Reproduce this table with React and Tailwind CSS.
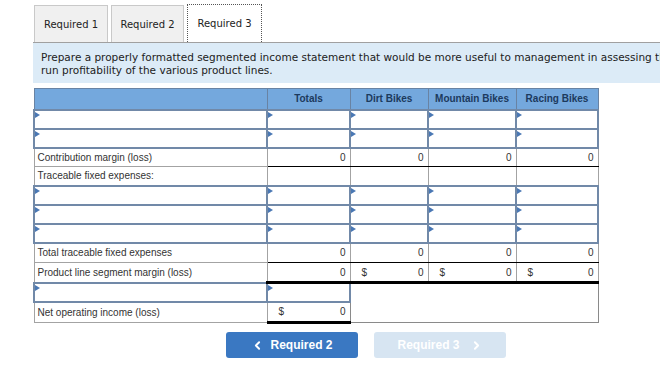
import { ChevronLeft, ChevronRight } from "lucide-react";

const tabs = [
  { label: "Required 1", w: "w-[74px]" },
  { label: "Required 2", w: "w-[73px]" },
  { label: "Required 3", w: "w-[75px]", active: true },
];

// small blue marker in the corner of every editable cell
const InputCell = () => (
  <td className="relative p-0 border-2 border-[#7189a8] bg-white">
    <span className="absolute left-0 top-[1px] h-0 w-0 border-y-[3px] border-y-transparent border-l-[5px] border-l-[#4a78b4]" />
  </td>
);

const InputRow = ({ dataCols = 4 }) => (
  <tr className="h-[19px]">
    <InputCell />
    {Array.from({ length: dataCols }).map((_, i) => (
      <InputCell key={i} />
    ))}
  </tr>
);

const Label = ({ children }) => (
  <td className="border border-[#a3a3a3] px-[3px] text-left text-[10px] text-[#333]">
    {children}
  </td>
);

const Num = ({ dollar, cls = "" }) => (
  <td className={"border-x border-[#a3a3a3] px-[4px] text-[10px] text-[#333] " + cls}>
    <div className="flex items-center justify-between">
      <span className="pl-[7px]">{dollar ? "$" : ""}</span>
      <span>0</span>
    </div>
  </td>
);

const App = () => {
  return (
    <div className="w-[660px] h-[374px] overflow-hidden bg-white">
      <div className="flex items-end gap-[3px] pl-[34px] pt-[4px] font-['DejaVu_Sans',Verdana,sans-serif] text-[10px] text-[#222]">
        {tabs.map((t) => (
          <div
            key={t.label}
            className={
              t.active
                ? `${t.w} h-[38px] flex items-center justify-center border border-b-0 border-dotted border-[#555] bg-white`
                : `${t.w} h-[37px] flex items-center justify-center border border-b-0 border-[#c9c9c9] bg-[#f0f0f0]`
            }
          >
            {t.label}
          </div>
        ))}
      </div>

      <div className="ml-[33px] w-[740px] h-[41px] border-t border-[#a0a0a0] bg-[#dcebf7] px-[8px] pt-[8px] whitespace-nowrap font-['DejaVu_Sans',Verdana,sans-serif] text-[10.5px] leading-[13px] text-[#222]">
        Prepare a properly formatted segmented income statement that would be more useful to management in assessing the long-
        <br />
        run profitability of the various product lines.
      </div>

      <table className="ml-[33px] mt-[5px] w-[564px] table-fixed border-collapse font-['Liberation_Sans',Arial,sans-serif] text-[10px]">
        <colgroup>
          <col className="w-[233px]" />
          <col className="w-[83px]" />
          <col className="w-[78px]" />
          <col className="w-[88px]" />
          <col className="w-[82px]" />
        </colgroup>
        <thead>
          <tr className="h-[21px] bg-[#74a8dd] text-[#1c3a5e] font-bold">
            <th className="border border-[#6983a3]"></th>
            <th className="border border-[#6983a3] text-center">Totals</th>
            <th className="border border-[#6983a3] text-center">Dirt Bikes</th>
            <th className="border border-[#6983a3] text-center">Mountain Bikes</th>
            <th className="border border-[#6983a3] text-center">Racing Bikes</th>
          </tr>
        </thead>
        <tbody>
          <InputRow />
          <InputRow />
          <tr className="h-[19px]">
            <Label>Contribution margin (loss)</Label>
            <Num cls="border-t border-t-black border-b border-b-black" />
            <Num cls="border-t border-t-black border-b border-b-black" />
            <Num cls="border-t border-t-black border-b border-b-black" />
            <Num cls="border-t border-t-black border-b border-b-black" />
          </tr>
          <tr className="h-[19px]">
            <Label>Traceable fixed expenses:</Label>
            <td className="border border-[#a3a3a3]"></td>
            <td className="border border-[#a3a3a3]"></td>
            <td className="border border-[#a3a3a3]"></td>
            <td className="border border-[#a3a3a3]"></td>
          </tr>
          <InputRow />
          <InputRow />
          <InputRow />
          <tr className="h-[20px]">
            <Label>Total traceable fixed expenses</Label>
            <Num cls="border-b border-b-black" />
            <Num cls="border-b border-b-black" />
            <Num cls="border-b border-b-black" />
            <Num cls="border-b border-b-black" />
          </tr>
          <tr className="h-[20px]">
            <Label>Product line segment margin (loss)</Label>
            <Num cls="border-b-[3px] border-b-black" />
            <Num dollar cls="border-b-[3px] border-b-black" />
            <Num dollar cls="border-b-[3px] border-b-black" />
            <Num dollar cls="border-b-[3px] border-b-black" />
          </tr>
          <tr className="h-[19px]">
            <InputCell />
            <InputCell />
            <td
              colSpan={3}
              rowSpan={2}
              className="border border-[#8a8a8a] border-t-[3px] border-t-black bg-white"
            ></td>
          </tr>
          <tr className="h-[21px]">
            <Label>Net operating income (loss)</Label>
            <Num dollar cls="border-b-[3px] border-b-black" />
          </tr>
        </tbody>
      </table>

      <div className="ml-[226px] mt-[8px] flex gap-[16px] font-['Liberation_Sans',Arial,sans-serif] text-[12px] font-bold text-white">
        <button className="flex h-[26px] w-[132px] items-center justify-center gap-[6px] rounded-[3px] bg-[#3a78c2]">
          <ChevronLeft size={13} strokeWidth={3.5} />
          <span>Required 2</span>
        </button>
        <button className="flex h-[26px] w-[132px] items-center justify-center gap-[10px] rounded-[3px] bg-[#d7e5f2]">
          <span>Required 3</span>
          <ChevronRight size={13} strokeWidth={3.5} />
        </button>
      </div>
    </div>
  );
};

export default App;
